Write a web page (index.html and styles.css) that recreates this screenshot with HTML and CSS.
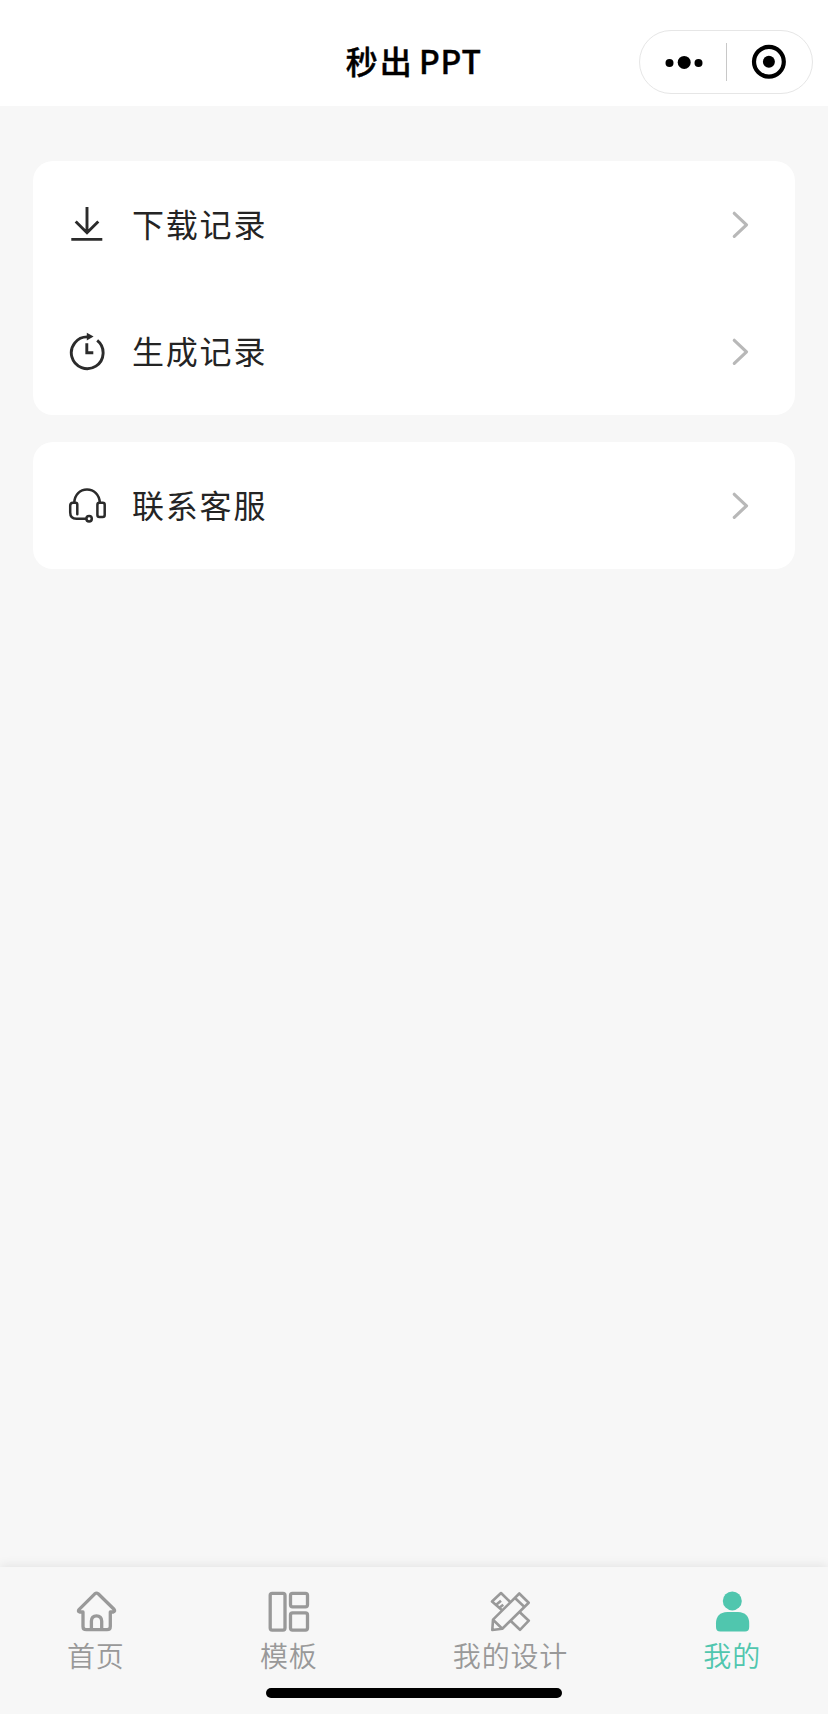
FILE: index.html
```
<!DOCTYPE html>
<html lang="zh-CN">
<head>
    <meta charset="UTF-8">
    <meta name="viewport" content="width=device-width, initial-scale=1.0">
    <title>秒出PPT</title>
    <link rel="stylesheet" href="styles.css">
</head>
<body>
    <header class="navbar">
        <h1 class="title">秒出<span class="latin">PPT</span></h1>
        <div class="capsule">
            <svg class="capsule-half" viewBox="0 0 86 62">
                <circle cx="29.5" cy="32" r="4"/>
                <circle cx="44.2" cy="31.4" r="6.5"/>
                <circle cx="58.5" cy="32" r="4"/>
            </svg>
            <span class="divider"></span>
            <svg class="capsule-half" viewBox="0 0 86 62">
                <circle cx="42.9" cy="30.8" r="14.9" fill="none" stroke="#000" stroke-width="4.2"/>
                <circle cx="42.9" cy="30.8" r="6"/>
            </svg>
        </div>
    </header>

    <main class="content">
        <section class="card">
            <a class="row">
                <svg class="row-icon" viewBox="0 0 40 40">
                    <path d="M20 2v25.5M8.7 16.5 20 27.8l11.3-11.3M4.3 34.4h31"/>
                </svg>
                <span class="row-text">下载记录</span>
                <svg class="arrow" viewBox="0 0 20 30"><path d="M3.3 3.3 15.5 14.8 3.3 26.3"/></svg>
            </a>
            <a class="row">
                <svg class="row-icon" viewBox="0 0 40 40">
                    <path d="M21 4.9A15.9 15.9 0 1 0 30.2 8.4"/>
                    <path d="M19.8 11.3v9.5h6.5"/>
                    <path class="solid" d="M19.8.8l6.8 3.8-6.8 4z"/>
                </svg>
                <span class="row-text">生成记录</span>
                <svg class="arrow" viewBox="0 0 20 30"><path d="M3.3 3.3 15.5 14.8 3.3 26.3"/></svg>
            </a>
        </section>

        <section class="card">
            <a class="row">
                <svg class="row-icon headset" viewBox="0 0 40 40">
                    <path d="M7.3 16.5C7.6 8.7 13 3.4 20 3.4S32.4 8.7 32.8 16.5"/>
                    <path d="M10.3 28.2V18.5Q10.3 16.8 8.6 16.8H5.8Q3.2 17 3.2 19.8V26.5Q3.2 32.7 9.5 32.7H19"/>
                    <circle cx="22.1" cy="32.8" r="2.7"/>
                    <rect x="30.4" y="16.8" width="7.3" height="14.2" rx="2"/>
                </svg>
                <span class="row-text">联系客服</span>
                <svg class="arrow" viewBox="0 0 20 30"><path d="M3.3 3.3 15.5 14.8 3.3 26.3"/></svg>
            </a>
        </section>
    </main>

    <nav class="tabbar">
        <a class="tab">
            <svg class="tab-icon" viewBox="0 0 44 44">
                <path d="M9 22H5.6Q3.5 21.3 5.2 19.3L20.8 3.8Q22.5 2.5 24.2 3.8L40 19.3Q41.5 21.3 39.4 22H36.3V36.5Q36.3 39.7 33 39.7H12.3Q9 39.7 9 36.5Z"/>
                <path d="M17.4 39.5V31Q17.6 25.8 22.5 25.8T27.7 31V39.5"/>
            </svg>
            <span>首页</span>
        </a>
        <a class="tab">
            <svg class="tab-icon" viewBox="0 0 44 44">
                <rect x="3.2" y="3.3" width="14.8" height="36.8" rx="2"/>
                <rect x="23.5" y="3.3" width="17" height="13.5" rx="2"/>
                <rect x="23.5" y="22.9" width="17" height="17.2" rx="2"/>
            </svg>
            <span>模板</span>
        </a>
        <a class="tab">
            <svg class="tab-icon thin" viewBox="0 0 44 44">
                <path d="M13.8 20 4 11.5 13 3l9.5 9.2M31.3 21.7l9.5 9L32 39.8 22.8 31"/>
                <path d="M8.5 14.5l4.5-3.7M11.3 17.7l4-3"/>
                <path d="M5 29.7 31.3 3.5l9.4 9.2-26.4 26L4.3 40zM5 29.7l9.3 9M27 8l9.5 9"/>
            </svg>
            <span>我的设计</span>
        </a>
        <a class="tab active">
            <svg class="tab-icon" viewBox="0 0 44 44">
                <circle class="solid" cx="22.3" cy="10.9" r="9.5"/>
                <path class="solid" d="M17.3 22h10.7Q39.2 22.5 39.2 33.5V37Q39.2 41.6 35 41.6H10.3Q6 41.6 6 37V33.5Q6 22.5 17.3 22z"/>
            </svg>
            <span>我的</span>
        </a>
        <div class="home-indicator"></div>
    </nav>
</body>
</html>
```
FILE: styles.css
```
* {
    margin: 0;
    padding: 0;
    box-sizing: border-box;
}

body {
    font-family: "Noto Sans CJK SC", sans-serif;
    background: #f7f7f7;
    height: 100vh;
    display: flex;
    flex-direction: column;
    overflow: hidden;
}

svg {
    display: block;
    flex-shrink: 0;
}

.navbar {
    height: 106px;
    background: #fff;
    padding: 30px 15px 12px;
    display: grid;
    grid-template-columns: 174px 1fr 174px;
    align-items: center;
}

.title {
    grid-column: 2;
    text-align: center;
    font-size: 32px;
    font-weight: 500;
    line-height: 60px;
    padding-bottom: 4px;
    letter-spacing: 2px;
    color: #000;
    -webkit-text-stroke: 0.4px #000;
    white-space: nowrap;
}

.latin {
    margin-left: 5px;
    letter-spacing: 1px;
}

.capsule {
    height: 64px;
    border: 1px solid #e6e6e6;
    border-radius: 32px;
    display: flex;
    align-items: center;
}

.capsule-half {
    width: 86px;
    height: 62px;
}

.divider {
    width: 1px;
    height: 38px;
    margin-right: -1px;
    background: #c8c8c8;
}

.content {
    flex: 1;
    padding: 55px 33px 0;
    display: flex;
    flex-direction: column;
    gap: 27px;
}

.card {
    background: #fff;
    border-radius: 20px;
}

.row {
    height: 127px;
    padding: 0 44px 0 34px;
    display: flex;
    align-items: center;
}

.row-icon {
    width: 40px;
    height: 40px;
    fill: none;
    stroke: #2b2b2b;
    stroke-width: 2.9;
}

.row-icon.headset {
    stroke-width: 2.5;
    stroke-linecap: round;
}

.row-icon .solid {
    fill: #2b2b2b;
    stroke: none;
}

.row-text {
    flex: 1;
    margin-left: 25px;
    padding-bottom: 3px;
    font-size: 32px;
    font-weight: 400;
    letter-spacing: 1.8px;
    color: #242424;
}

.arrow {
    width: 20px;
    height: 30px;
    fill: none;
    stroke: #b8b8b8;
    stroke-width: 3.2;
    stroke-linecap: round;
    stroke-linejoin: round;
}

.tabbar {
    position: relative;
    height: 147px;
    padding: 23px 67px 0;
    background: #f7f7f7;
    box-shadow: 0 -2px 10px rgba(0, 0, 0, 0.08);
    display: flex;
    justify-content: space-between;
    align-items: flex-start;
}

.tab {
    display: flex;
    flex-direction: column;
    align-items: center;
    gap: 1px;
    font-size: 28px;
    font-weight: 350;
    line-height: 40px;
    letter-spacing: 0.8px;
    color: #999;
}

.tab.active {
    color: #50c6ae;
}

.tab-icon {
    width: 44px;
    height: 44px;
    fill: none;
    stroke: currentColor;
    stroke-width: 3.3;
    stroke-linejoin: round;
}

.tab-icon.thin {
    stroke-width: 2.6;
}

.tab-icon .solid {
    fill: currentColor;
    stroke: none;
}

.home-indicator {
    position: absolute;
    left: 266px;
    bottom: 16px;
    width: 296px;
    height: 10px;
    border-radius: 5px;
    background: #000;
}
```
